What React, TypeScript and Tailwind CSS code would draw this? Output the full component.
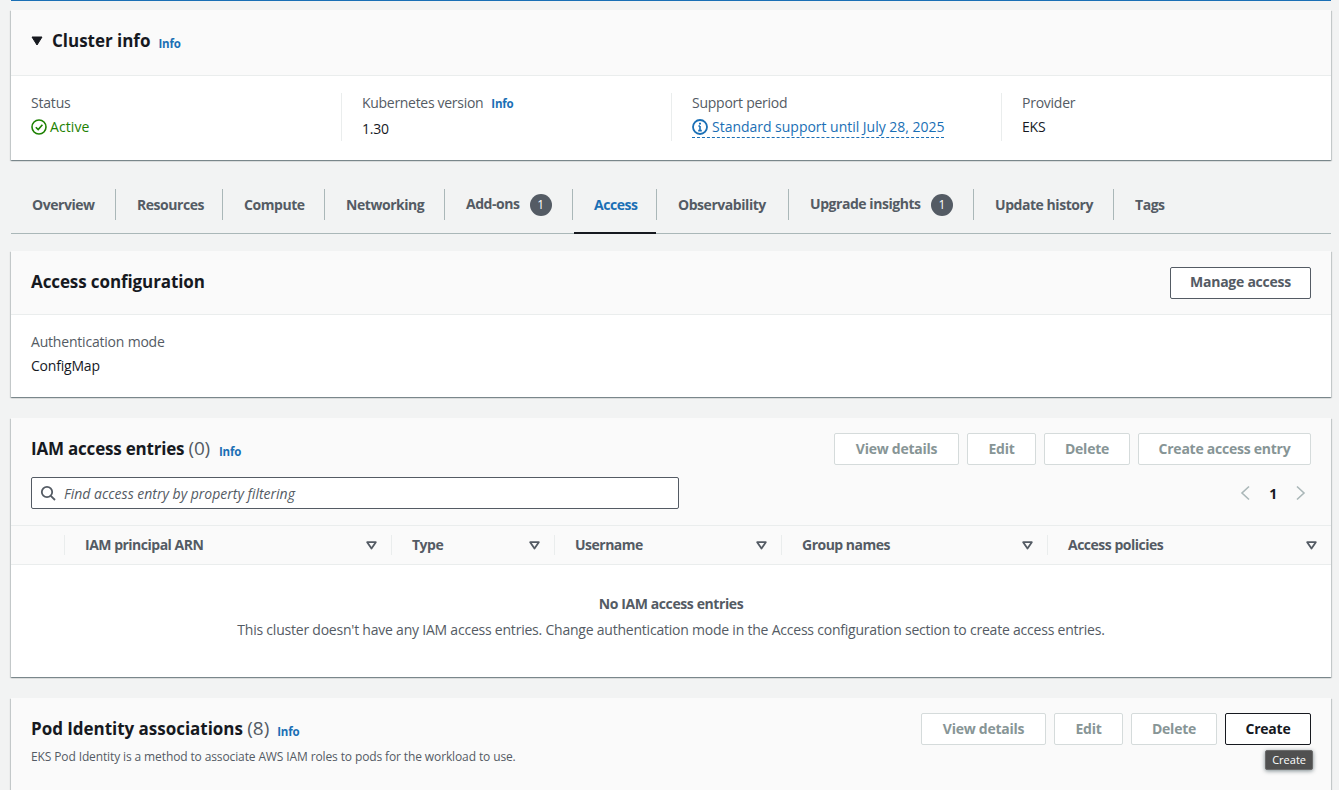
const LINK = "text-[#1a6fb5]";

const InfoLink = ({ className = "" }: { className?: string }) => (
  <span className={`text-[11.5px] font-bold tracking-[-0.2px] ${LINK} ${className}`}>Info</span>
);

const Button = ({ label, width, variant = "disabled" }: { label: string; width: string; variant?: string }) => (
  <div
    className={`h-[32px] flex items-center justify-center rounded-[2px] border bg-white pb-[2px] text-[14px] font-bold tracking-[-0.25px] ${width} ${
      variant === "hover"
        ? "border-[#16191f] text-[#16191f]"
        : variant === "normal"
          ? "border-[#545b64] text-[#545b64]"
          : "border-[#d5dbdb] text-[#879596]"
    }`}
  >
    {label}
  </div>
);

const Caret = () => (
  <svg width="11" height="9" viewBox="0 0 11 9" className="shrink-0">
    <path d="M1.2 1.2h8.6L5.5 7.6z" fill="none" stroke="#545b64" strokeWidth="1.8" strokeLinejoin="round" />
  </svg>
);

const tabs = [
  { label: "Overview", width: "w-[105px]" },
  { label: "Resources", width: "w-[107px]" },
  { label: "Compute", width: "w-[102px]" },
  { label: "Networking", width: "w-[120px]" },
  { label: "Add-ons", width: "w-[128px]", badge: true },
  { label: "Access", width: "w-[84px]", active: true },
  { label: "Observability", width: "w-[132px]" },
  { label: "Upgrade insights", width: "w-[185px]", badge: true },
  { label: "Update history", width: "w-[140px]" },
  { label: "Tags", width: "w-[80px]", last: true },
];

const columns = [
  { label: "IAM principal ARN", width: "w-[327px]" },
  { label: "Type", width: "w-[163px]" },
  { label: "Username", width: "w-[227px]" },
  { label: "Group names", width: "w-[266px]" },
  { label: "Access policies", width: "flex-1", last: true },
];

const cardShadow =
  "shadow-[0_1px_1px_0_rgba(0,28,36,0.3),1px_1px_1px_0_rgba(0,28,36,0.15),-1px_1px_1px_0_rgba(0,28,36,0.15)]";

const App = () => {
  return (
    <div className="h-[790px] overflow-hidden bg-[#f2f3f3] font-['Open_Sans',sans-serif] text-[14px] tracking-[-0.2px] text-[#16191f]">
      <div className="pl-[11px] pr-[8px]">
        <div className="h-px bg-[#1a6fb5]" />

        {/* Cluster info */}
        <section className={`mt-[9px] h-[150px] bg-white ${cardShadow}`}>
          <div className="flex h-[66px] items-center border-b border-[#eaeded] bg-[#fafafa] pb-[4px] pl-[20px]">
            <svg width="12" height="10" viewBox="0 0 12 10" className="mr-[9px]">
              <path d="M1 1h10L6 9z" fill="#16191f" stroke="#16191f" strokeWidth="1" strokeLinejoin="round" />
            </svg>
            <h2 className="text-[17px] font-bold leading-[22px] tracking-[-0.02px]">Cluster info</h2>
            <InfoLink className="ml-[8px] mt-[7px]" />
          </div>
          <div className="flex pl-[20px] pt-[17px]">
            <div className="h-[48px] w-[311px] border-r border-[#eaeded]">
              <div className="leading-[20px] text-[#545b64]">Status</div>
              <div className="mt-[4px] flex items-center gap-[3px] leading-[20px] tracking-[0.1px] text-[#1d8102]">
                <svg width="16" height="16" viewBox="0 0 16 16" fill="none" stroke="#1d8102" strokeWidth="1.6">
                  <circle cx="8" cy="8" r="7" />
                  <path d="M4.8 8.2 7.2 10.6 11.4 5.8" />
                </svg>
                Active
              </div>
            </div>
            <div className="h-[48px] w-[330px] border-r border-[#eaeded] pl-[20px]">
              <div className="flex h-[20px] items-center leading-[20px] tracking-[-0.3px] text-[#545b64]">
                Kubernetes version
                <InfoLink className="ml-[8px] mt-[2px]" />
              </div>
              <div className="mt-[6px] leading-[20px]">1.30</div>
            </div>
            <div className="h-[48px] w-[330px] border-r border-[#eaeded] pl-[20px]">
              <div className="leading-[20px] tracking-[-0.25px] text-[#545b64]">Support period</div>
              <div className={`mt-[4px] inline-flex items-center gap-[4px] border-b border-dashed border-[#1a6fb5] leading-[20px] tracking-[-0.02px] ${LINK}`}>
                <svg width="16" height="16" viewBox="0 0 16 16" fill="none" stroke="#1a6fb5" strokeWidth="1.8">
                  <circle cx="8" cy="8" r="7" />
                  <path d="M8 7v4.5M6.2 11.6h3.6M6.4 7H8" strokeWidth="1.6" />
                  <path d="M8 3.8v1.6" strokeWidth="2" />
                </svg>
                Standard support until July 28, 2025
              </div>
            </div>
            <div className="pl-[20px]">
              <div className="leading-[20px] tracking-[-0.25px] text-[#545b64]">Provider</div>
              <div className="mt-[4px] leading-[20px]">EKS</div>
            </div>
          </div>
        </section>

        {/* Tabs */}
        <nav className="mt-[29px] flex h-[45px] items-start border-b border-[#aab7b8]">
          {tabs.map((tab) => (
            <div key={tab.label} className={`relative h-[45px] ${tab.width}`}>
              <div
                className={`flex h-[31px] items-center pl-[21px] font-bold tracking-[-0.45px] ${
                  tab.last ? "" : "border-r border-[#aab7b8]"
                } ${tab.active ? LINK : "text-[#545b64]"}`}
              >
                <span className={tab.badge ? "-mt-[2px]" : ""}>{tab.label}</span>
                {tab.badge && (
                  <span className="ml-[10px] flex h-[22px] w-[22px] items-center justify-center rounded-full bg-[#545b64] text-[12px] font-normal text-white">
                    1
                  </span>
                )}
              </div>
              {tab.active && <div className="absolute bottom-0 left-px right-px h-[2px] bg-[#16191f]" />}
            </div>
          ))}
        </nav>

        {/* Access configuration */}
        <section className={`mt-[17px] h-[146px] bg-white ${cardShadow}`}>
          <div className="flex h-[64px] items-center justify-between border-b border-[#eaeded] bg-[#fafafa] px-[20px]">
            <h2 className="-mt-[2px] text-[17px] font-bold leading-[22px] tracking-[-0.1px]">Access configuration</h2>
            <Button label="Manage access" width="w-[141px]" variant="normal" />
          </div>
          <div className="pl-[20px] pt-[17px]">
            <div className="leading-[20px] text-[#545b64]">Authentication mode</div>
            <div className="mt-[4px] leading-[20px]">ConfigMap</div>
          </div>
        </section>

        {/* IAM access entries */}
        <section className={`mt-[21px] h-[259px] bg-white ${cardShadow}`}>
          <div className="h-[108px] border-b border-[#eaeded] bg-[#fafafa] px-[20px] pt-[15px]">
            <div className="flex h-[32px] items-center justify-between">
              <div className="flex items-center">
                <h2 className="-mt-[1px] text-[17px] font-bold leading-[22px]">
                  IAM access entries <span className="text-[19px] font-normal text-[#545b64]">(0)</span>
                </h2>
                <InfoLink className="ml-[9px] mt-[5px]" />
              </div>
              <div className="flex gap-[8px]">
                <Button label="View details" width="w-[125px]" />
                <Button label="Edit" width="w-[69px]" />
                <Button label="Delete" width="w-[86px]" />
                <Button label="Create access entry" width="w-[173px]" />
              </div>
            </div>
            <div className="mt-[12px] flex items-center justify-between">
              <div className="flex h-[32px] w-[648px] items-center rounded-[2px] border border-[#545b64] bg-white pl-[8px]">
                <svg width="16" height="16" viewBox="0 0 16 16" fill="none" stroke="#545b64" strokeWidth="1.8" className="mr-[8px]">
                  <circle cx="7" cy="7" r="5.2" />
                  <path d="M10.8 10.8 15 15" />
                </svg>
                <span className="italic tracking-[0px] text-[#545b64]">Find access entry by property filtering</span>
              </div>
              <div className="mr-[4px] flex items-center gap-[18px]">
                <svg width="12" height="16" viewBox="0 0 12 16" fill="none" stroke="#aab7b8" strokeWidth="1.6">
                  <path d="M10 1.5 3 8l7 6.5" />
                </svg>
                <span className="text-[14px] font-bold">1</span>
                <svg width="12" height="16" viewBox="0 0 12 16" fill="none" stroke="#aab7b8" strokeWidth="1.6">
                  <path d="M2 1.5 9 8l-7 6.5" />
                </svg>
              </div>
            </div>
          </div>

          <div className="flex h-[39px] items-center border-b border-[#eaeded] bg-[#fafafa] pl-[53px]">
            {columns.map((col) => (
              <div
                key={col.label}
                className={`flex h-[20px] items-center justify-between border-l border-[#eaeded] pl-[20px] pr-[14px] font-bold tracking-[-0.5px] text-[#545b64] ${col.width}`}
              >
                <span className="-mt-[2px]">{col.label}</span>
                <Caret />
              </div>
            ))}
          </div>

          <div className="pt-[29px] text-center text-[#545b64]">
            <div className="font-bold leading-[20px] tracking-[-0.4px]">No IAM access entries</div>
            <div className="mt-[6px] leading-[20px] tracking-[-0.22px]">
              This cluster doesn't have any IAM access entries. Change authentication mode in the Access configuration section to create access entries.
            </div>
          </div>
        </section>

        {/* Pod Identity associations */}
        <section className={`mt-[21px] h-[200px] bg-[#fafafa] ${cardShadow}`}>
          <div className="relative flex items-start justify-between px-[20px] pt-[15px]">
            <div>
              <div className="flex h-[32px] items-center">
                <h2 className="-mt-[1px] text-[17px] font-bold leading-[22px] tracking-[-0.03px]">
                  Pod Identity associations <span className="text-[19px] font-normal text-[#545b64]">(8)</span>
                </h2>
                <InfoLink className="ml-[8px] mt-[5px]" />
              </div>
              <p className="mt-[4px] text-[12px] leading-[16px] tracking-[-0.12px] text-[#545b64]">
                EKS Pod Identity is a method to associate AWS IAM roles to pods for the workload to use.
              </p>
            </div>
            <div className="flex gap-[8px]">
              <Button label="View details" width="w-[125px]" />
              <Button label="Edit" width="w-[69px]" />
              <Button label="Delete" width="w-[86px]" />
              <Button label="Create" width="w-[86px]" variant="hover" />
            </div>
            <div className="absolute right-[18px] top-[52px] rounded-[2px] border border-[#6b6b6b] bg-[#505050] px-[6px] py-[1px] text-[11px] leading-[16px] tracking-[0px] text-white shadow-[0_1px_4px_rgba(0,28,36,0.5)]">
              Create
            </div>
          </div>
        </section>
      </div>
    </div>
  );
};

export default App;
